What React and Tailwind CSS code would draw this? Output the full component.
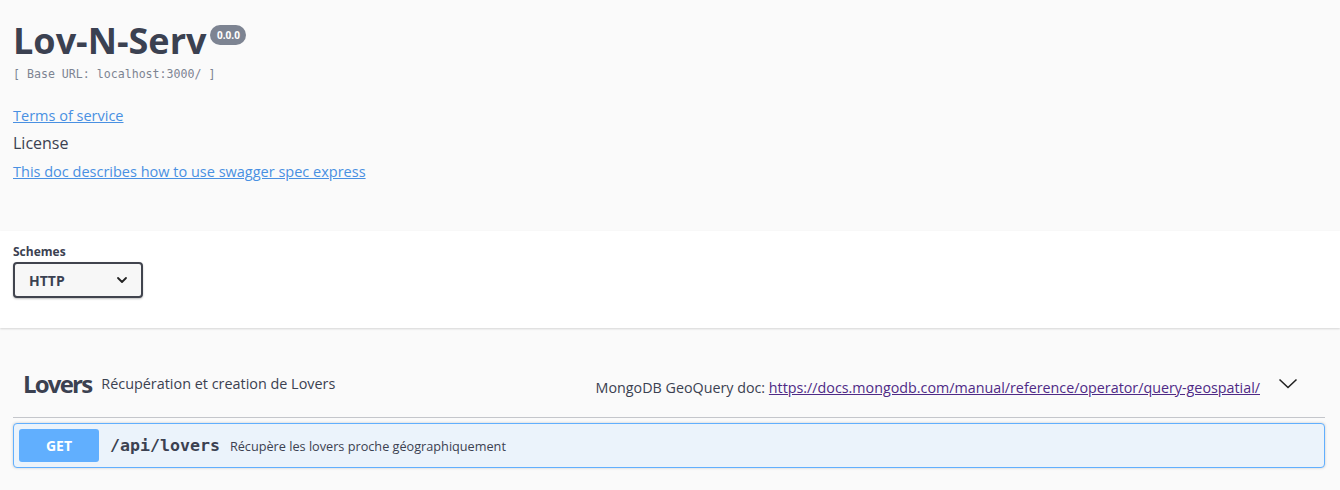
export default function App() {
  return (
    <div className="min-h-[490px] bg-[#fafafa] text-[#3b4151] font-['Open_Sans',sans-serif]">
      {/* Info */}
      <div className="h-[231px] px-[13px] pt-[21px]">
        <div className="flex items-start">
          <h2 className="text-[36px] leading-[40px] font-bold text-[#3b4151] font-['Open_Sans',sans-serif]">Lov-N-Serv</h2>
          <span className="ml-[4px] mt-[4px] inline-flex h-[20px] w-[36px] items-center justify-center rounded-full bg-[#7d8492] text-[10px] font-bold text-white font-['Open_Sans',sans-serif]">0.0.0</span>
        </div>
        <div className="mt-[5px] text-[11.6px] leading-[16px] text-[#7d8492] font-['DejaVu_Sans_Mono',monospace]">[ Base URL: localhost:3000/ ]</div>
        <div className="mt-[24px] text-[14.5px] leading-[20px]">
          <a className="text-[#4990e2] underline" href="#">Terms of service</a>
        </div>
        <div className="mt-[5px] text-[16px] leading-[24px] text-[#3b4151]">License</div>
        <div className="mt-[7px] text-[14.5px] leading-[20px]">
          <a className="text-[#4990e2] underline" href="#">This doc describes how to use swagger spec express</a>
        </div>
      </div>

      {/* Schemes */}
      <div className="h-[97px] bg-white px-[13px] pt-[13px] shadow-[0_1px_2px_0_rgba(0,0,0,0.15)]">
        <div className="text-[12px] leading-[16px] font-bold text-[#3b4151]">Schemes</div>
        <div className="mt-[2px] flex h-[36px] w-[130px] items-center justify-between rounded-[4px] border-2 border-[#41444e] bg-[#f7f7f7] pl-[14px] pr-[14px] shadow-[0_1px_2px_0_rgba(0,0,0,0.25)]">
          <span className="text-[14px] font-bold text-[#3b4151]">HTTP</span>
          <svg width="12" height="8" viewBox="0 0 12 8" className="-mr-[1px]">
            <path d="M2 2 L6 6 L10 2" fill="none" stroke="#222" strokeWidth="1.8" strokeLinecap="round" strokeLinejoin="round" />
          </svg>
        </div>
      </div>

      {/* Tag section */}
      <div className="pl-[13px] pr-[15px] pt-[22px] pb-[20px]">
        <div className="flex h-[68px] items-center border-b border-[#c4c6cb] pl-[10px] pr-[27px]">
          <span className="text-[24px] leading-[32px] font-bold tracking-[-1.8px] text-[#3b4151]">Lovers</span>
          <span className="ml-[10px] text-[14.4px] leading-[20px] text-[#3b4151]">Récupération et creation de Lovers</span>
          <div className="ml-auto pt-[8px] text-[14.3px] leading-[20px] text-[#3b4151]">
            MongoDB GeoQuery doc:{" "}
            <a href="#" className="text-[#4f2a86] underline">https://docs.mongodb.com/manual/reference/operator/query-geospatial/</a>
          </div>
          <svg width="20" height="20" viewBox="0 0 20 20" className="ml-[18px]">
            <path d="M1.5 5.5 L10 13.5 L18.5 5.5" fill="none" stroke="#222" strokeWidth="1.6" />
          </svg>
        </div>

        <div className="mt-[5px] flex items-center rounded-[4px] border border-[#61affe] bg-[#ebf3fb] p-[5px] shadow-[0_0_3px_rgba(0,0,0,0.19)]">
          <span className="flex h-[33px] w-[80px] items-center justify-center rounded-[3px] bg-[#61affe] text-[14px] font-bold text-white">GET</span>
          <span className="pl-[11px] pr-[10px] pt-[2px] text-[16.6px] font-bold text-[#3b4151] font-['DejaVu_Sans_Mono',monospace]">/api/lovers</span>
          <span className="pt-[2px] text-[12.7px] text-[#3b4151]">Récupère les lovers proche géographiquement</span>
        </div>
      </div>
    </div>
  );
}
